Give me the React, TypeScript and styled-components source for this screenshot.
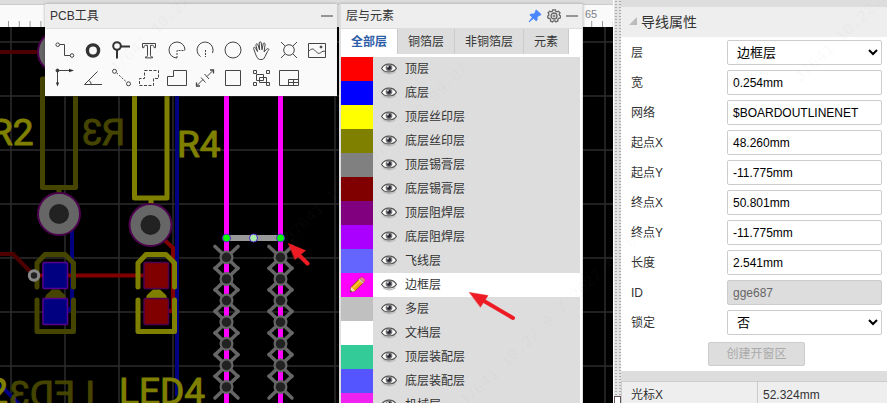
import React, { useState } from "react";
import styled, { createGlobalStyle } from "styled-components";

const GlobalStyle = createGlobalStyle`
  * { box-sizing: border-box; }
  body { margin: 0; overflow: hidden; }
  body, button, input, select {
    font-family: "Liberation Sans", "Noto Sans CJK SC", sans-serif;
    font-size: 12px;
    color: #333;
  }
`;

const Page = styled.div`
  position: relative;
  display: flex;
  height: 100vh;
  overflow: hidden;
  background: #ddd;
`;

const Workspace = styled.main`
  position: relative;
  display: flex;
  flex: 1;
  flex-direction: column;
  min-width: 0;
  background: #000;
`;

const TopStrip = styled.div`
  height: 5px;
  background: #ddd;
  border-bottom: 1px solid #ccc;
`;

const Ruler = styled.svg`
  width: 100%;
  height: 22px;
  flex: none;
  background: #fafafa;
`;

const Board = styled.svg`
  width: 100%;
  flex: 1;
  min-height: 0;
`;

const FloatingPanel = styled.section`
  position: absolute;
  top: 4px;
  background: #fafafa;
  box-shadow: 0 0 3px rgba(0, 0, 0, 0.3);
`;

const ToolsPanel = styled(FloatingPanel)`
  left: 45px;
  width: 292px;
`;

const LayersPanel = styled(FloatingPanel)`
  left: 339px;
  width: 244px;
  bottom: 0;
  overflow: hidden;
  border: solid #ddd;
  border-width: 0 1px 0 2px;
  background: #fff;
`;

const PanelHeader = styled.header`
  display: flex;
  align-items: center;
  gap: 5px;
  height: 25px;
  padding: 0 4px 0 5px;
  background: #eee;
  border-bottom: 1px solid #ddd;
`;

const PanelTitle = styled.h2`
  flex: 1;
  margin: 0;
  font-size: 12px;
  line-height: 24px;
  font-weight: 400;
`;

const IconButton = styled.button`
  display: grid;
  place-items: center;
  padding: 0;
  border: 0;
  background: none;
`;

const ToolGrid = styled.div`
  display: grid;
  grid-template-columns: repeat(10, 28px);
  grid-auto-rows: 28px;
  padding: 7px 6px 4px;
`;

const ToolIcon = styled.svg`
  display: block;
  width: 22px;
  height: 20px;
  fill: none;
  stroke: #444;
  stroke-width: 1;
`;

const TabBar = styled.div`
  display: flex;
  height: 25px;
`;

const Tab = styled.button<{ $active: boolean }>`
  padding: 0 10px;
  border: 0;
  border-right: 1px solid #ccc;
  background: ${(p) => (p.$active ? "#fff" : "#ddd")};
  color: ${(p) => (p.$active ? "#2f5ea8" : "#333")};
  font-weight: ${(p) => (p.$active ? 700 : 400)};
  line-height: 24px;
  white-space: nowrap;
`;

const LayerList = styled.ul`
  margin: 3px 2px 0 0;
  padding: 0;
  list-style: none;
`;

const LayerRow = styled.li<{ $active: boolean }>`
  display: flex;
  align-items: center;
  gap: 8px;
  height: 24px;
  line-height: 24px;
  background: ${(p) => (p.$active ? "#fff" : "#ddd")};
`;

const Swatch = styled.button<{ $color: string }>`
  display: grid;
  place-items: center;
  width: 32px;
  height: 24px;
  padding: 0;
  border: 0;
  background: ${(p) => p.$color};
`;

const Splitter = styled.div`
  display: flex;
  align-items: flex-end;
  width: 8px;
  flex: none;
  border-left: 1px solid #fff;
  background: radial-gradient(circle, #aaa 0 1px, transparent 1px) 0 0 / 4px 3px #e4e4e4;
`;

const SplitHandle = styled.div`
  width: 7px;
  height: 7px;
  border: 1px solid #655;
  border-bottom: 0;
  background: #fff;
`;

const Sidebar = styled.aside`
  width: 266px;
  flex: none;
  overflow: hidden;
  padding-top: 7px;
`;

const SectionHeader = styled.h2`
  display: flex;
  align-items: center;
  gap: 4px;
  height: 30px;
  margin: 0;
  padding: 0 0 2px 8px;
  background: #eee;
  font-size: 14px;
  font-weight: 400;
`;

const Properties = styled.form`
  display: grid;
  gap: 5px;
  padding: 3px 5px 5px 10px;
  background: #fff;
`;

const Field = styled.div`
  display: grid;
  grid-template-columns: 96px 1fr;
  align-items: center;
  height: 25px;
`;

const FieldLabel = styled.label`
  line-height: 24px;
`;

const TextBox = styled.input`
  width: 100%;
  height: 25px;
  padding: 0 5px;
  border: 1px solid #ccc;
  border-radius: 2px;
  background: #fff;
  color: #000;
  &:disabled {
    background: #ddd;
    color: #666;
  }
`;

const Dropdown = styled.select`
  width: 100%;
  height: 25px;
  padding: 0 0 0 5px;
  border: 1px solid #ccc;
  border-radius: 2px;
  background: #fff;
  color: #000;
  font-size: 13px;
`;

const WindowButton = styled.button`
  justify-self: center;
  height: 24px;
  margin: 2px 0 0;
  padding: 0 17px;
  border: 1px solid #ccc;
  border-radius: 2px;
  background: #ddd;
  color: #aaa;
  line-height: 20px;
`;

const InfoTable = styled.table`
  width: 100%;
  margin-top: 10px;
  border-collapse: collapse;
  background: #eee;
  th, td {
    height: 30px;
    padding: 0 5px 4px;
    border: 1px solid #ccc;
    border-right: 0;
    text-align: left;
    font-weight: 400;
    line-height: 24px;
  }
  th {
    width: 136px;
    padding-left: 9px;
  }
`;

const Overlay = styled.svg`
  position: absolute;
  inset: 0;
  width: 100%;
  height: 100%;
  pointer-events: none;
`;

const ToggleArrow = styled.svg`
  width: 8px;
  height: 8px;
  fill: #bbb;
`;

const tools: [string, React.ReactNode][] = [
  ["导线", <><circle cx="3.7" cy="4.7" r="1.8" /><path d="M5.5 4.5h5v11h5.7" /><circle cx="18" cy="15.5" r="1.8" /></>],
  ["焊盘", <circle cx="11" cy="10.5" r="5.6" stroke="#333" strokeWidth="3.4" />],
  ["过孔", <g stroke="#333" strokeWidth="2"><circle cx="7" cy="6" r="3.8" /><path d="M11 6.5h9M7 10v8.5" /></g>],
  ["文本", <path d="M4.5 3.5h13v4.2h-1.4c0-1.7-.5-2.4-1.8-2.4H12.5v10.4c0 .8.6 1.2 2 1.2v1h-7v-1c1.4 0 2-.4 2-1.2V5.300H7.700c-1.300 0-1.800.7-1.800 2.400H4.500z" />],
  ["圆弧一", <><path d="M19 10a8 8 0 1 0-8 8" /><path d="M11 18v-7.500h8" strokeDasharray="2 1" /></>],
  ["圆弧二", <><path d="M18.500 13a8 8 0 1 0-12 3.600" /><path d="M11.500 10v7" strokeDasharray="2 1" /></>],
  ["圆形", <circle cx="11" cy="10" r="8" />],
  ["拖动", <path d="M8.200 18.800C6.800 17 5.900 15.500 5.100 12.700L3.600 8.500c-.4-1.300 1.300-1.900 1.900-.6l2 3.600-1.600-6.300c-.3-1.500 1.600-1.900 2-.5l1.700 5.300-.4-7c0-1.500 1.900-1.500 2.100-.1l.7 6.900 1.200-5.900c.3-1.400 2.100-1 1.900.4l-1 7.600 2.300-2.600c.8-1 2.500-.9 2.400.4-.1.600-.7.7-1.300 1.800l-2.400 4.900-1.400 2.400M8.200 18.800c1.500 1.100 4 1 5.500 0" />],
  ["通孔", <><circle cx="11" cy="10" r="5.300" /><path d="m3 2 4.300 4.300M19 2l-4.300 4.300M3 18l4.300-4.300M19 18l-4.300-4.300" /></>],
  ["图片", <><path d="M2.500 3.500h17v14h-17zM2.500 11.500c2-2 4-3.600 6-1.500s4 4.500 6 2.800 3-2 5-1.300" /><circle cx="15" cy="7" r="1" fill="#444" /></>],
  ["画布原点", <><path d="M3.500 2.500H16M3.500 2.500V16" /><path d="M15 .8 20 2.500 15 4.200zM1.800 14.500h3.400l-1.700 4z" fill="#333" stroke="none" /><circle cx="3.500" cy="2.500" r="1.500" fill="#333" /></>],
  ["量角器", <path d="M20 16.500H2.500L15.500 3.500M6.500 12.500c1.800.6 2.600 2 2.600 4" />],
  ["连接焊盘", <><circle cx="4.500" cy="3.300" r="2" /><circle cx="18.500" cy="15.800" r="2" /><path d="m6.500 4.800 10.300 9.500" strokeDasharray="2 1.500" /></>],
  ["覆铜", <path d="M6.500 2.500h14v8h-5v7h-14v-7h5z" strokeDasharray="3 1.500" />],
  ["实心填充", <path d="M7.500 2.500h13v15h-19v-9h6z" />],
  ["尺寸", <><path d="m3.500 17 5.500-5.500M13 8.500l5.500-5.500M7 9.500l4.500 5M10.500 6l4.500 5" /><path d="M2.500 14.500V18H6M16 2h3.500v3.500" strokeWidth="1.300" /></>],
  ["矩形", <path d="M3.500 2.500h15v15h-15z" />],
  ["组合", <path d="M3.500 2.500h3v3h-3zM16.500 2.500h3v3h-3zM3.500 14.500h3v3h-3zM16.500 14.500h3v3h-3zM6.500 6.500h7v6h-7zM9.500 9.500h7v5h-7z" />],
  ["面板", <path d="M1.500 2.500h19v15h-19zM10.500 17.500v-6h10M10.500 14.500h10M15.500 11.500v6" />],
];

const layers: [string, string][] = [
  ["顶层", "#f00"],
  ["底层", "#00f"],
  ["顶层丝印层", "#ff0"],
  ["底层丝印层", "#808000"],
  ["顶层锡膏层", "#808080"],
  ["底层锡膏层", "#800000"],
  ["顶层阻焊层", "#800080"],
  ["底层阻焊层", "#a0f"],
  ["飞线层", "#6464ff"],
  ["边框层", "#f0f"],
  ["多层", "#c0c0c0"],
  ["文档层", "#fff"],
  ["顶层装配层", "#3c9"],
  ["底层装配层", "#55f"],
  ["机械层", "#f022f0"],
];

const tabs = ["全部层", "铜箔层", "非铜箔层", "元素"];

const textFields = [
  ["width", "宽", "0.254mm"],
  ["net", "网络", "$BOARDOUTLINENET"],
  ["startX", "起点X", "48.260mm"],
  ["startY", "起点Y", "-11.775mm"],
  ["endX", "终点X", "50.801mm"],
  ["endY", "终点Y", "-11.775mm"],
  ["length", "长度", "2.541mm"],
];

const Minus = () => (
  <svg width="12" height="12"><path d="M0 6h12" stroke="#777" strokeWidth="1.500" /></svg>
);

const Eye = () => (
  <svg width="16" height="15" viewBox="0 0 16 15">
    <path d="M2 9.500c4 3 9 3 12.500 0" stroke="#bbb" strokeWidth="1.500" fill="none" />
    <path d="M.6 6.500C3.500 1 12 .4 15.400 6.300 12 11 4 11.300.6 6.500z" fill="#fff" stroke="#555" strokeWidth="1.200" />
    <circle cx="8" cy="5.800" r="3.400" fill="#777" />
    <circle cx="8" cy="5.800" r="2" fill="#223" />
    <circle cx="6.800" cy="4.600" r="1" fill="#ddd" />
  </svg>
);

const Pencil = () => (
  <svg width="18" height="18" viewBox="0 0 18 18">
    <path d="m2 16 1.200-5L11.500 2.700l4 4L7 15z" fill="#f7a80c" stroke="#7a4c12" strokeWidth=".8" />
    <path d="m4.600 12.400 8-8" stroke="#ffd34a" strokeWidth="1.200" />
    <path d="m2 16 1.200-5 4 4z" fill="#f6dfb6" />
    <path d="m2 16 .5-2 1.600 1.500z" fill="#222" />
    <path d="m10.600 3.600 1.200-1.200 4 4-1.200 1.200z" fill="#ccc" />
    <path d="m11.800 2.400 1-1c1.500-1.200 5 2 4 3.800l-1.100 1.200z" fill="#f08a80" stroke="#a4453e" strokeWidth=".5" />
  </svg>
);

const PinIcon = () => (
  <svg width="14" height="14" viewBox="0 0 14 14">
    <path d="m8.300 1 4.800 4.500-1.300.8-.8-.1-2 2.300c.5 1.400.1 2.500-.7 3.300L5.400 9.300 1 13l3.400-4.700L1.900 5.800c1-.8 2.300-1 3.500-.6l2.300-2.100-.2-1z" fill="#4a86ff" stroke="#4a86ff" />
  </svg>
);

const GearIcon = () => (
  <svg width="14" height="14" viewBox="0 0 14 14" fill="none" stroke="#666">
    <path d="m5.700.8-.4 1.500-1.200.6-1.500-.7L1.100 3.900l.8 1.300-.3 1.300-1.100.7.700 2.100 1.500.1.900 1.200-.1 1.400 2 .9 1-1.100h1.400l1.100 1.100 1.900-1-.1-1.400.8-1.200 1.500-.2.600-2-1.200-.8-.2-1.200.7-1.300L11.500 2.200l-1.400.7-1.300-.6L8.400.8z" strokeWidth="1.300" />
    <circle cx="7" cy="7" r="3" strokeWidth="1.300" />
    <circle cx="7" cy="7" r="1" />
  </svg>
);

const RoundPad = ({ x, y }: { x: number; y: number }) => (
  <>
    <circle cx={x} cy={y} r="21" fill="#666" stroke="#4d004d" strokeWidth="2" />
    <circle cx={x} cy={y} r="10" fill="#222" />
  </>
);

const Led = ({ x, line, pad, edge }: { x: number; line: string; pad: string; edge: string }) => (
  <g transform={`translate(${x} 0)`}>
    <g fill="none" stroke={line} strokeWidth="5" strokeLinecap="round" strokeLinejoin="round">
      <path d="M-18 287v-24l8-8.500h20l8.500 8.500v24M-18 300v31.500h36.500V300" />
    </g>
    <path d="m-10 298 1-3 6-5.500h7l6 5.500 1 3z" fill={line} />
    <g fill={pad} stroke={edge} strokeWidth="1.500">
      <rect x="-12" y="262.500" width="24.500" height="26" rx="1" />
      <rect x="-12" y="298.500" width="24.500" height="26" rx="1" />
    </g>
  </g>
);

const Stitches = ({ x }: { x: number }) => (
  <g transform={`translate(${x} 0)`}>
    {[257.4, 279, 300.6, 322.2, 343.8, 365.4, 387].map((y) => (
      <g key={y} transform={`translate(0 ${y})`}>
        <path d="m-11.500-11 23 22M11.500-11l-23 22" stroke="#666" strokeWidth="3.500" strokeLinecap="round" />
        <circle r="7" fill="#666" />
        <circle r="4.800" fill="#222" />
      </g>
    ))}
  </g>
);

const gridLines = Array.from({ length: 60 }, (_, i) => 54 * i);

const BoardDrawing = () => (
  <Board aria-label="PCB">
    <g transform="translate(0 -27)">
      <g stroke="#2c2c2c" strokeWidth="1.500">
        {gridLines.map((n) => (
          <React.Fragment key={n}>
            <line x1={n + 11} x2={n + 11} y1="0" y2="3000" />
            <line x1="0" x2="3200" y1={n + 42} y2={n + 42} />
          </React.Fragment>
        ))}
      </g>
      <g fill="none" strokeWidth="4">
        <path d="M0 52h45M0 254h13l21 21.500" stroke="#4d0000" />
        <path d="M72 225v82l-5 5h-8M0 385l20 20M177 90v306" stroke="#000080" />
        <path d="M34 275.500h115M160 236l13 12v63h-10" stroke="#800000" />
      </g>
      <g fill="none" strokeWidth="5" strokeLinejoin="round">
        <path d="M42.500 79h33v108.500h-33zM59 187v8" stroke="#454500" />
        <path d="M134.500 79h32.500v119h-32.500zM151 198v10" stroke="#808000" />
      </g>
      <RoundPad x={59} y={52} />
      <RoundPad x={59} y={214} />
      <RoundPad x={150.5} y={225} />
      <Led x={55} line="#454500" pad="#000080" edge="#5a0090" />
      <Led x={156} line="#808000" pad="#800000" edge="#4d004d" />
      <circle cx="34" cy="275.500" r="4.700" fill="#222" stroke="#888" strokeWidth="3" />
      <g fontFamily="Roboto, sans-serif" fontSize="37" strokeWidth="1" strokeLinejoin="round">
        <g fill="#808000" stroke="#808000">
          <text x="-10" y="145">R2</text>
          <text x="177" y="157">R4</text>
          <text x="119" y="404">LED4</text>
          <text x="8" y="404" textAnchor="end">LED2</text>
        </g>
        <g fill="#454500" stroke="#454500">
          <text transform="translate(125 145) scale(-1 1)">R3</text>
          <text transform="translate(95 407) scale(-1 1)">LED3</text>
        </g>
      </g>
      <path d="M226.500 90v330M280.500 90v330" stroke="#f0f" strokeWidth="5" />
      <Stitches x={226.5} />
      <Stitches x={280.5} />
      <path d="M226 238h54" stroke="#999" strokeWidth="6" />
      <g stroke="#52c" strokeWidth="1">
        <circle cx="226.500" cy="238" r="4" fill="#0f0" />
        <circle cx="253.500" cy="238" r="4" fill="#aea" />
        <circle cx="280.500" cy="238" r="4" fill="#0f0" />
      </g>
    </g>
  </Board>
);

const watermark = "J7641 10.22.0.7 2022-09-07";
const watermarkStarts = [[115, 75], [290, 243], [465, 408], [800, 83]];

export default function App() {
  const [activeTab, setActiveTab] = useState("全部层");
  const [activeLayer, setActiveLayer] = useState("边框层");

  return (
    <Page>
      <GlobalStyle />
      <Workspace>
        <TopStrip />
        <Ruler>
          <g stroke="#999">
            {Array.from({ length: 200 }, (_, i) => (
              <line key={i} x1={8.5 + i * 10.8} x2={8.5 + i * 10.8} y1="16" y2="22" />
            ))}
          </g>
          <text x="585" y="13" fill="#7a8089" fontSize="11">65</text>
        </Ruler>
        <BoardDrawing />

        <ToolsPanel aria-label="PCB工具">
          <PanelHeader>
            <PanelTitle>PCB工具</PanelTitle>
            <IconButton aria-label="收起"><Minus /></IconButton>
          </PanelHeader>
          <ToolGrid>
            {tools.map(([name, drawing]) => (
              <IconButton key={name} aria-label={name}>
                <ToolIcon viewBox="0 0 22 20">{drawing}</ToolIcon>
              </IconButton>
            ))}
          </ToolGrid>
        </ToolsPanel>

        <LayersPanel aria-label="层与元素">
          <PanelHeader>
            <PanelTitle>层与元素</PanelTitle>
            <IconButton aria-label="固定"><PinIcon /></IconButton>
            <IconButton aria-label="设置"><GearIcon /></IconButton>
            <IconButton aria-label="收起"><Minus /></IconButton>
          </PanelHeader>
          <TabBar role="tablist">
            {tabs.map((tab) => (
              <Tab
                key={tab}
                role="tab"
                aria-selected={tab === activeTab}
                $active={tab === activeTab}
                onClick={() => setActiveTab(tab)}
              >
                {tab}
              </Tab>
            ))}
          </TabBar>
          <LayerList>
            {layers.map(([name, color]) => (
              <LayerRow key={name} $active={name === activeLayer}>
                <Swatch $color={color} aria-label={name} onClick={() => setActiveLayer(name)}>
                  {name === activeLayer && <Pencil />}
                </Swatch>
                <IconButton aria-label={`显示${name}`}><Eye /></IconButton>
                <span>{name}</span>
              </LayerRow>
            ))}
          </LayerList>
        </LayersPanel>
      </Workspace>

      <Splitter><SplitHandle /></Splitter>

      <Sidebar>
        <SectionHeader>
          <ToggleArrow viewBox="0 0 8 8"><path d="M8 0v8H0z" /></ToggleArrow>
          导线属性
        </SectionHeader>
        <Properties onSubmit={(e) => e.preventDefault()}>
          <Field>
            <FieldLabel htmlFor="layer">层</FieldLabel>
            <Dropdown id="layer" defaultValue="边框层">
              {layers.map(([name]) => <option key={name}>{name}</option>)}
            </Dropdown>
          </Field>
          {textFields.map(([id, label, value]) => (
            <Field key={id}>
              <FieldLabel htmlFor={id}>{label}</FieldLabel>
              <TextBox id={id} defaultValue={value} />
            </Field>
          ))}
          <Field>
            <FieldLabel htmlFor="item-id">ID</FieldLabel>
            <TextBox id="item-id" defaultValue="gge687" disabled />
          </Field>
          <Field>
            <FieldLabel htmlFor="locked">锁定</FieldLabel>
            <Dropdown id="locked" defaultValue="否">
              <option>否</option>
              <option>是</option>
            </Dropdown>
          </Field>
          <WindowButton type="button" disabled>创建开窗区</WindowButton>
        </Properties>
        <InfoTable>
          <tbody>
            <tr><th scope="row">光标X</th><td>52.324mm</td></tr>
          </tbody>
        </InfoTable>
      </Sidebar>

      <Overlay aria-hidden="true">
        <g fill="#808080" fillOpacity=".06" fontFamily="Liberation Mono, monospace" fontSize="16">
          {watermarkStarts.map(([x, y]) => (
            <text key={x} transform={`translate(${x} ${y}) rotate(-44)`}>{watermark}</text>
          ))}
        </g>
        <g fill="#ed1c24" stroke="#ed1c24" strokeLinejoin="round" strokeLinecap="round">
          <path d="m288.500 243.500 17 7-10.500 9z" strokeWidth=".5" />
          <path d="m298 254 9.500 9.500" strokeWidth="4" />
          <path d="m469.500 292.500 18.500 3-7.500 11.500z" strokeWidth=".5" />
          <path d="m484 301 29 17" strokeWidth="4" />
        </g>
      </Overlay>
    </Page>
  );
}
